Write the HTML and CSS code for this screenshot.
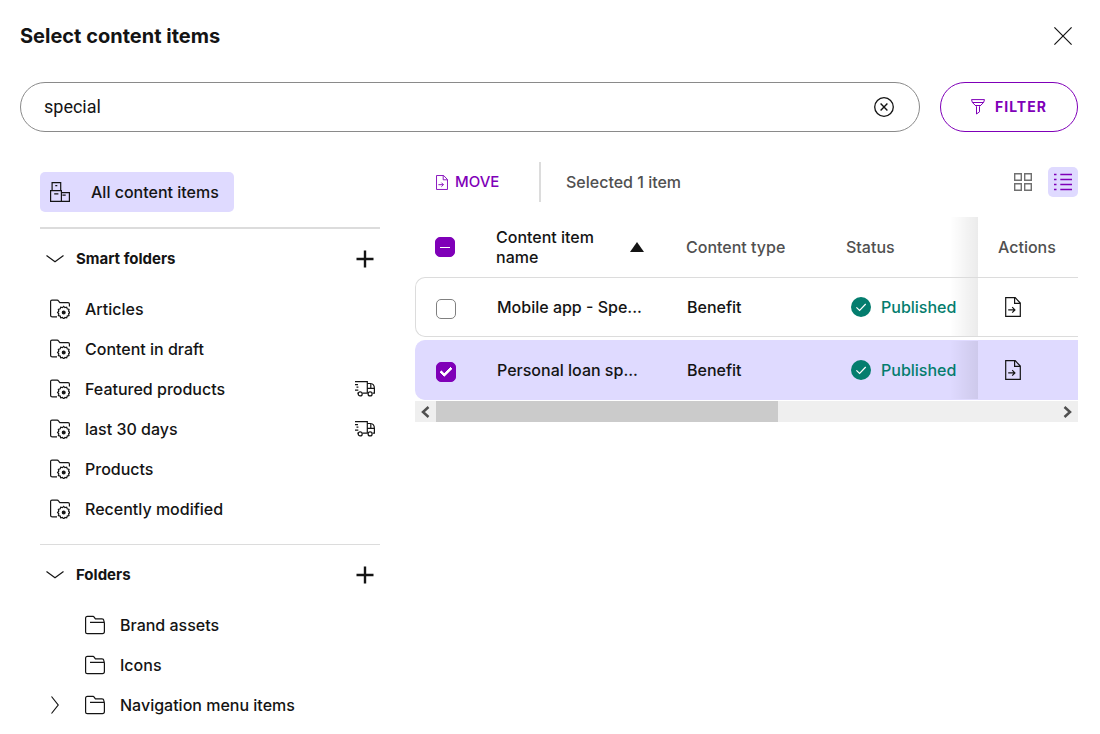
FILE: index.html
```html
<!DOCTYPE html>
<html lang="en">
<head>
<meta charset="utf-8">
<meta name="viewport" content="width=device-width, initial-scale=1">
<title>Select content items</title>
<link rel="stylesheet" href="styles.css">
</head>
<body>
<svg class="sprite" aria-hidden="true">
  <symbol id="smart" viewBox="0 0 20 20">
    <path d="M7 17.8H2.5Q.6 17.8.6 15.9V2.5Q.6 1.2 2 1.2H7.2Q8 1.2 8.5 1.9L9.4 3.1Q9.8 3.7 10.6 3.7H18Q19.4 3.7 19.4 5.1V7.5"/>
    <path d="M13.7 7.3l1.2 1.3 1.8-.4.5 1.7 1.8.6-.4 1.7 1.2 1.3-1.2 1.3.4 1.8-1.8.5-.5 1.8-1.8-.4-1.2 1.3-1.2-1.3-1.8.4-.5-1.8-1.8-.5.4-1.8-1.2-1.3 1.2-1.3-.4-1.7 1.8-.6.5-1.7 1.8.4z"/>
    <circle cx="13.7" cy="13.4" r="1.4" fill="currentColor"/>
  </symbol>
  <symbol id="folder" viewBox="0 0 20 20">
    <path d="M5 7.4H19.4M2.5 1.4H8Q8.8 1.4 9.2 2.1L10 3.3Q10.4 3.9 11.2 3.9H17Q18.6 3.9 18.8 5.4L19.4 8V16.5Q19.4 18.6 17.4 18.6H2.5Q.6 18.6.6 16.7V3.3Q.6 1.4 2.5 1.4Z"/>
  </symbol>
  <symbol id="truck" viewBox="0 0 20 16">
    <path d="M0 .6H12.3V12.2H7.5M3.2 12.2H2.4M0 3.6H3M1.5 6.2H3.4M0 9.2H3.3M12.3 2.5H15.5Q19.4 2.8 19.4 7.4V12.2H17.6M12.8 12.2H12.3M12.3 7.4H19.4M15.8 2.6V7.4"/>
    <circle cx="5.2" cy="12.9" r="2"/><circle cx="15.1" cy="12.9" r="2"/>
  </symbol>
  <symbol id="down" viewBox="0 0 18 8"><path d="M.5.5L9 6.8 17.5.5"/></symbol>
  <symbol id="right" viewBox="0 0 8 18"><path d="M.5.5L7.2 9 .5 17.5"/></symbol>
  <symbol id="plus" viewBox="0 0 18 18"><path d="M9 .5V17.5M.5 9H17.5" stroke-width="2.4"/></symbol>
  <symbol id="move" viewBox="0 0 16 20">
    <path d="M.7.7H10.2L15.3 6V19.3H.7ZM9.6.7V6.4H15.3M3.2 12.9H9.8M7.2 10.2L9.9 12.9 7.2 15.6"/>
  </symbol>
  <symbol id="published" viewBox="0 0 20 20">
    <circle cx="10" cy="10" r="10" fill="#047d6e" stroke="none"/><path d="M5.4 10.4L8.6 13.5 14.7 7" stroke="#fff"/>
  </symbol>
</svg>
<div class="dialog">
  <header class="header">
    <h1 class="title">Select content items</h1>
    <button class="icon-button" aria-label="Close"><svg width="18" height="18" viewBox="0 0 18 18"><path d="M.4.4L17.6 17.6M17.6.4L.4 17.6"/></svg></button>
  </header>
  <div class="search-row">
    <div class="search">
      <input class="search-input" type="text" aria-label="Search" value="special">
      <button class="icon-button" aria-label="Clear search"><svg width="20" height="20" viewBox="0 0 20 20"><circle cx="10" cy="10" r="9.3" stroke-width="1.3"/><path d="M6.6 6.6L13.4 13.4M13.4 6.6L6.6 13.4" stroke-width="1.4"/></svg></button>
    </div>
    <button class="filter">
      <svg class="funnel" width="14" height="16" viewBox="0 0 14 16"><path d="M.5 .6H13.5L12.6 3.5H1.4ZM1.4 3.5L5.5 7.5V15L8.5 12.8V7.5L12.6 3.5M5 6.5H9"/></svg>
      Filter
    </button>
  </div>
  <div class="columns">
    <nav class="sidebar" aria-label="Folders">
      <a class="all-items" href="#">
        <svg width="20" height="20" viewBox="0 0 20 20"><path d="M.6 8.6H11.4V19.4H.6ZM2.1 8.6V.6H10.7V8.6M11.4 10.6H19.4V19.4H11.4M4.2 11.9H8.4M5.3 3.7H7.3M12.4 13.2H15.7"/></svg>
        All content items
      </a>
      <section class="group group-strong">
        <div class="group-head">
          <button class="toggle" aria-expanded="true"><svg width="18" height="8"><use href="#down"/></svg>Smart folders</button>
          <button class="icon-button" aria-label="Add smart folder"><svg width="18" height="18"><use href="#plus"/></svg></button>
        </div>
        <ul class="list">
          <li class="item"><a class="link" href="#"><svg width="20" height="20"><use href="#smart"/></svg>Articles</a></li>
          <li class="item"><a class="link" href="#"><svg width="20" height="20"><use href="#smart"/></svg>Content in draft</a></li>
          <li class="item"><a class="link" href="#"><svg width="20" height="20"><use href="#smart"/></svg>Featured products</a><svg width="20" height="16"><use href="#truck"/></svg></li>
          <li class="item"><a class="link" href="#"><svg width="20" height="20"><use href="#smart"/></svg>last 30 days</a><svg width="20" height="16"><use href="#truck"/></svg></li>
          <li class="item"><a class="link" href="#"><svg width="20" height="20"><use href="#smart"/></svg>Products</a></li>
          <li class="item"><a class="link" href="#"><svg width="20" height="20"><use href="#smart"/></svg>Recently modified</a></li>
        </ul>
      </section>
      <section class="group">
        <div class="group-head">
          <button class="toggle" aria-expanded="true"><svg width="18" height="8"><use href="#down"/></svg>Folders</button>
          <button class="icon-button" aria-label="Add folder"><svg width="18" height="18"><use href="#plus"/></svg></button>
        </div>
        <ul class="list">
          <li class="item"><span class="expander"></span><a class="link" href="#"><svg width="20" height="20"><use href="#folder"/></svg>Brand assets</a></li>
          <li class="item"><span class="expander"></span><a class="link" href="#"><svg width="20" height="20"><use href="#folder"/></svg>Icons</a></li>
          <li class="item"><button class="expander" aria-label="Expand Navigation menu items"><svg width="8" height="18"><use href="#right"/></svg></button><a class="link" href="#"><svg width="20" height="20"><use href="#folder"/></svg>Navigation menu items</a></li>
        </ul>
      </section>
    </nav>
    <main class="content">
      <div class="toolbar">
        <button class="move"><svg width="12" height="15"><use href="#move"/></svg>Move</button>
        <p class="selected">Selected 1 item</p>
        <button class="view" aria-label="Grid view"><svg width="18" height="18" viewBox="0 0 18 18"><path d="M.7.7H7.3V7.3H.7ZM10.7.7H17.3V7.3H10.7ZM.7 10.7H7.3V17.3H.7ZM10.7 10.7H17.3V17.3H10.7Z"/></svg></button>
        <button class="view view-on" aria-label="List view" aria-pressed="true"><svg width="18" height="18" viewBox="0 0 18 18"><path d="M6.3 1.5H18M6.3 6.5H18M6.3 11.5H18M6.3 16.5H18M0 1.5H2.5M0 6.5H2.5M0 11.5H2.5M0 16.5H2.5"/></svg></button>
      </div>
      <table class="table">
        <colgroup><col class="col-check"><col class="col-name"><col class="col-type"><col class="col-status"><col class="col-actions"></colgroup>
        <thead>
          <tr>
            <th class="check-cell"><input class="check check-mixed" type="checkbox" aria-label="Select all"></th>
            <th aria-sort="ascending"><button class="sort">Content item name <svg class="arrow" width="14" height="10" viewBox="0 0 14 10"><path d="M7 0L14 10H0Z"/></svg></button></th>
            <th>Content type</th>
            <th>Status</th>
            <th class="actions">Actions</th>
          </tr>
        </thead>
        <tbody>
          <tr>
            <td class="check-cell"><input class="check" type="checkbox" aria-label="Select Mobile app"></td>
            <td class="name">Mobile app - Spe...</td>
            <td>Benefit</td>
            <td><span class="status"><svg width="20" height="20"><use href="#published"/></svg>Published</span></td>
            <td class="actions"><button class="icon-button" aria-label="Move item"><svg width="16" height="20"><use href="#move"/></svg></button></td>
          </tr>
          <tr class="row-on">
            <td class="check-cell"><input class="check" type="checkbox" aria-label="Select Personal loan" checked></td>
            <td class="name">Personal loan sp...</td>
            <td>Benefit</td>
            <td><span class="status"><svg width="20" height="20"><use href="#published"/></svg>Published</span></td>
            <td class="actions"><button class="icon-button" aria-label="Move item"><svg width="16" height="20"><use href="#move"/></svg></button></td>
          </tr>
        </tbody>
      </table>
      <div class="scrollbar">
        <button class="scroll-button" aria-label="Scroll left"><svg width="9" height="12" viewBox="0 0 9 12"><path d="M7.5 1L2 6 7.5 11"/></svg></button>
        <div class="track"><div class="thumb"></div></div>
        <button class="scroll-button" aria-label="Scroll right"><svg width="9" height="12" viewBox="0 0 9 12"><path d="M1.5 1L7 6 1.5 11"/></svg></button>
      </div>
    </main>
  </div>
</div>
</body>
</html>
```
FILE: styles.css
```css
* { box-sizing: border-box; }
body {
  margin: 0;
  background: #fff;
  color: #141414;
  font: 500 16px/20px Inter, "Liberation Sans", sans-serif;
}
button {
  display: flex;
  align-items: center;
  padding: 0;
  border: 0;
  background: none;
  color: inherit;
  font: inherit;
  text-align: left;
}
a { color: inherit; text-decoration: none; }
svg { flex: none; fill: none; stroke: currentColor; stroke-width: 1.2; }
.sprite { display: none; }
.dialog { padding: 20px 22px 8px 20px; }
.header { display: flex; align-items: center; justify-content: space-between; height: 32px; }
.title { margin: 0; font-size: 20px; font-weight: 700; line-height: 32px; }
.icon-button { justify-content: center; min-width: 30px; height: 30px; }

.search-row { display: flex; gap: 20px; margin-top: 30px; }
.search {
  display: flex;
  flex: 1;
  align-items: center;
  height: 50px;
  padding: 0 20px 0 23px;
  border: 1px solid #8a8a8a;
  border-radius: 25px;
}
.search-input {
  flex: 1;
  min-width: 0;
  padding: 0;
  border: 0;
  outline: 0;
  background: none;
  color: inherit;
  font: 400 18px/24px Roboto, "Liberation Sans", sans-serif;
}
.filter {
  justify-content: center;
  gap: 10px;
  width: 138px;
  height: 50px;
  border: 1px solid #7f00b8;
  border-radius: 25px;
  color: #7f00b8;
  font-size: 14px;
  font-weight: 700;
  letter-spacing: 1px;
  text-transform: uppercase;
}
.funnel { stroke-width: 1; }

.columns { display: flex; gap: 35px; margin-top: 30px; }
.sidebar { width: 340px; margin: 10px 0 0 20px; flex: none; }
.all-items {
  display: inline-flex;
  align-items: center;
  gap: 21px;
  height: 40px;
  padding: 0 15px 0 10px;
  border-radius: 5px;
  background: #dfdaff;
}
.group { border-top: 1px solid #dcdcdc; margin-top: 15px; }
.group-strong { border-top-width: 2px; }
.group-head { display: flex; align-items: center; justify-content: space-between; height: 60px; }
.toggle { gap: 12px; padding-left: 6px; font-size: 15px; font-weight: 700; }
.list { margin: 0; padding: 0; list-style: none; }
.item { display: flex; align-items: center; height: 40px; padding: 0 5px 0 10px; }
.link { display: flex; flex: 1; align-items: center; gap: 15px; }
.expander { width: 35px; height: 30px; padding-left: 1px; }

.content { flex: 1; min-width: 0; }
.toolbar { display: flex; align-items: center; height: 40px; }
.move { gap: 7px; width: 124px; height: 40px; padding-left: 21px; color: #7f00b8; font-size: 15px; text-transform: uppercase; }
.selected { flex: 1; margin: 0; padding: 10px 25px; border-left: 2px solid #dcdcdc; color: #505050; }
.view { justify-content: center; width: 30px; height: 30px; margin-left: 10px; border-radius: 5px; color: #707070; }
.view svg { stroke-width: 1.4; }
.view-on { background: #dfdaff; color: #7f00b8; }

.table { width: 100%; margin: 12px 0 -2px; table-layout: fixed; border-spacing: 0 3px; }
.col-check { width: 66px; }
.col-type { width: 160px; }
.col-status { width: 147px; }
.col-actions { width: 100px; }
th { height: 57px; padding: 3px 15px 0; color: #505050; font-weight: 500; text-align: left; }
td { height: 60px; padding: 0 16px; border: solid #dcdcdc; border-width: 1px 0; }
.sort { gap: 12px; color: #141414; justify-content: space-between; width: 148px; }
.arrow { fill: #141414; stroke: none; }
th.check-cell { padding-left: 20px; }
td.check-cell { border-left-width: 1px; border-radius: 10px 0 0 10px; padding-left: 20px; }
.name { white-space: nowrap; }
.row-on td { border-color: #dfdaff; background: #dfdaff; }
.status { display: flex; align-items: center; gap: 10px; margin-left: 4px; color: #047d6e; }
.actions { position: relative; padding-left: 20px; }
.actions::before {
  content: "";
  position: absolute;
  top: 0;
  right: 100%;
  bottom: 0;
  width: 28px;
  background: linear-gradient(to right, transparent, rgba(0, 0, 0, .08));
}
th.actions::before { bottom: -3px; }
.check {
  display: grid;
  place-content: center;
  width: 20px;
  height: 20px;
  margin: 3px 0 0;
  border: 1px solid #808080;
  border-radius: 5px;
  appearance: none;
  background: #fff;
}
.check-mixed { margin-top: 0; }
.check-mixed, .check:checked { border-color: #7f00b8; background: #7f00b8; }
.check-mixed::before { content: ""; width: 10px; height: 1px; background: #fff; }
.check:checked::before {
  content: "";
  box-sizing: border-box;
  width: 12px;
  height: 7px;
  margin-bottom: 3px;
  border: solid #fff;
  border-width: 0 0 3px 3px;
  border-radius: 1px;
  transform: rotate(-45deg);
}
.scrollbar { display: flex; height: 21px; background: #efefef; color: #505050; }
.scroll-button { justify-content: center; width: 21px; }
.scroll-button svg { stroke-width: 2.5; }
.track { flex: 1; }
.thumb { width: 55%; height: 21px; background: #cbcbcb; }
```
